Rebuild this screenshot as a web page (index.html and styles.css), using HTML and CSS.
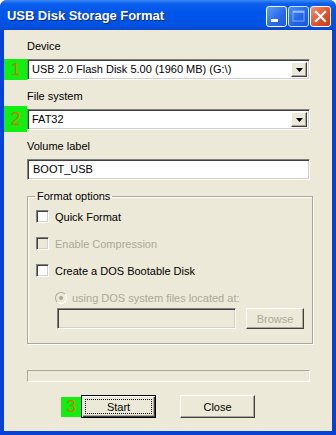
FILE: index.html
```html
<!DOCTYPE html>
<html>
<head>
<meta charset="utf-8">
<link rel="stylesheet" href="styles.css">
</head>
<body>
<div class="window">
  <div class="titlebar">
    <span class="title">USB Disk Storage Format</span>
    <div class="tbtns">
      <span class="tbtn min"><svg width="21" height="21" viewBox="0 0 21 21"><rect x="5" y="13" width="7" height="3" fill="#fff"/></svg></span>
      <span class="tbtn max"><svg width="21" height="21" viewBox="0 0 21 21"><rect x="5" y="5" width="11" height="10" fill="none" stroke="#fff" stroke-width="1" opacity="0.55"/><rect x="5" y="5" width="11" height="2" fill="#fff" opacity="0.55"/></svg></span>
      <span class="tbtn close"><svg width="21" height="21" viewBox="0 0 21 21"><path d="M6 6 L15 15 M15 6 L6 15" stroke="#fff" stroke-width="2.2" stroke-linecap="square"/></svg></span>
    </div>
  </div>
  <div class="body">
    <div class="label">Device</div>
    <div class="row">
      <span class="step s1">1</span>
      <div class="combo">
        <span class="ctext">USB 2.0 Flash Disk 5.00 (1960 MB) (G:\)</span>
        <span class="drop"><svg width="7" height="4" viewBox="0 0 7 4"><path d="M0 0 H7 L3.5 4 Z" fill="#000"/></svg></span>
      </div>
    </div>
    <div class="label">File system</div>
    <div class="row">
      <span class="step s2">2</span>
      <div class="combo">
        <span class="ctext">FAT32</span>
        <span class="drop"><svg width="7" height="4" viewBox="0 0 7 4"><path d="M0 0 H7 L3.5 4 Z" fill="#000"/></svg></span>
      </div>
    </div>
    <div class="label">Volume label</div>
    <div class="textbox">BOOT_USB</div>
    <fieldset class="group">
      <legend>Format options</legend>
      <div class="check"><span class="cb"></span><span>Quick Format</span></div>
      <div class="check disabled"><span class="cb"></span><span>Enable Compression</span></div>
      <div class="check"><span class="cb"></span><span>Create a DOS Bootable Disk</span></div>
      <div class="radio disabled"><span class="rb"><span class="dot"></span></span><span>using DOS system files located at:</span></div>
      <div class="pathrow">
        <div class="pathbox"></div>
        <div class="btn browse">Browse</div>
      </div>
    </fieldset>
    <div class="progress"></div>
    <div class="buttons">
      <span class="step s3">3</span>
      <div class="btn def"><span class="focus">Start</span></div>
      <div class="btn close-btn">Close</div>
    </div>
  </div>
</div>
</body>
</html>
```
FILE: styles.css
```css
html, body { margin: 0; padding: 0; }
body {
  width: 336px; height: 435px; overflow: hidden;
  font-family: "Liberation Sans", Arial, sans-serif;
  font-size: 11px; color: #000;
}
.window {
  width: 336px; height: 435px; box-sizing: border-box;
  background: #0841d8;
  display: flex; flex-direction: column;
  border-radius: 7px 7px 0 0;
  overflow: hidden;
}
.titlebar {
  height: 30px; flex: none;
  background: linear-gradient(to bottom, #3c8af5 0%, #0a5fee 12%, #0055ea 45%, #0052e2 85%, #0a48d0 100%);
  display: flex; align-items: center; justify-content: space-between;
  padding: 0 5px 0 7px;
}
.title {
  color: #fff; font-family: "Liberation Sans", sans-serif; font-weight: bold; font-size: 13px;
  text-shadow: 1px 1px 0 #0a2a80; letter-spacing: -0.05px;
}
.tbtns { display: flex; gap: 1px; margin-top: 2px; }
.tbtn {
  width: 21px; height: 21px; box-sizing: border-box;
  border: 1px solid #fff; border-radius: 3px;
  display: flex; overflow: hidden;
}
.tbtn svg { margin: -1px; }
.min { background: linear-gradient(135deg, #5a9cff, #2a68e8 60%, #2059d8); }
.max { background: linear-gradient(135deg, #5a9cff, #2a68e8 60%, #2059d8); opacity: 0.8; }
.close { background: linear-gradient(135deg, #f0907a, #e0532f 55%, #c83a18); }
.body {
  flex: 1; margin: 0 4px 4px 4px;
  background: #ece9d8;
  padding: 10px 22px 0 23px;
  display: flex; flex-direction: column;
}
.label { height: 13px; line-height: 13px; margin-bottom: 6px; }
.row { position: relative; height: 21px; margin-bottom: 10px; }
.step {
  position: absolute; left: -23px; top: 0; width: 23px; height: 21px;
  background: #12ee12; color: #c87800; font-size: 17px; line-height: 21px; text-align: center;
}
.s2 { top: -3px; height: 26px; line-height: 26px; font-size: 18px; }
.combo {
  height: 21px; box-sizing: border-box; background: #fff;
  border-top: 1px solid #808080; border-left: 1px solid #808080;
  border-right: 1px solid #fff; border-bottom: 1px solid #fff;
  box-shadow: inset 1px 1px 0 #404040, inset -1px -1px 0 #d4d0c8;
  display: flex; align-items: center; justify-content: space-between;
  padding: 0 2px 0 4px;
}
.ctext { line-height: 13px; }
.drop {
  width: 16px; height: 15px; box-sizing: border-box; background: #ece9d8;
  border-top: 1px solid #fff; border-left: 1px solid #fff;
  border-right: 1px solid #404040; border-bottom: 1px solid #404040;
  box-shadow: inset -1px -1px 0 #aca899;
  display: flex; align-items: center; justify-content: center;
}
.textbox {
  height: 21px; box-sizing: border-box; background: #fff;
  border-top: 1px solid #808080; border-left: 1px solid #808080;
  border-right: 1px solid #fff; border-bottom: 1px solid #fff;
  box-shadow: inset 1px 1px 0 #404040, inset -1px -1px 0 #d4d0c8;
  padding: 3px 5px; line-height: 13px;
}
.group {
  margin: 10px 0 0 0; padding: 7px 8px 9px 8px;
  border: 1px solid #aca899; box-shadow: inset 1px 1px 0 #fff, 1px 1px 0 #fff;
  height: 154px; box-sizing: border-box;
  display: flex; flex-direction: column;
}
.group legend { padding: 0 2px; margin-left: -1px; line-height: 13px; }
.check, .radio { display: flex; align-items: center; height: 13px; margin-bottom: 14px; }
.check .cb {
  width: 13px; height: 13px; box-sizing: border-box; background: #fff;
  border-top: 1px solid #808080; border-left: 1px solid #808080;
  border-right: 1px solid #fff; border-bottom: 1px solid #fff;
  box-shadow: inset 1px 1px 0 #404040, inset -1px -1px 0 #d4d0c8;
  margin-right: 6px;
}
.disabled { color: #aca899; }
.check.disabled .cb { background: #ece9d8; }
.radio { margin-left: 19px; margin-bottom: 4px; }
.rb {
  width: 12px; height: 12px; border-radius: 50%; box-sizing: border-box;
  border: 1px solid #aca899; border-right-color: #fff; border-bottom-color: #fff;
  background: #ece9d8; margin-right: 5px; display: flex; align-items: center; justify-content: center;
}
.rb .dot { width: 4px; height: 4px; border-radius: 50%; background: #aca899; }
.pathrow { display: flex; margin-left: 21px; gap: 10px; }
.pathbox {
  width: 179px; height: 21px; box-sizing: border-box; background: #ece9d8;
  border-top: 1px solid #808080; border-left: 1px solid #808080;
  border-right: 1px solid #fff; border-bottom: 1px solid #fff;
  box-shadow: inset 1px 1px 0 #404040, inset -1px -1px 0 #d4d0c8;
}
.btn {
  height: 21px; box-sizing: border-box; background: #ece9d8;
  border-top: 1px solid #fff; border-left: 1px solid #fff;
  border-right: 1px solid #404040; border-bottom: 1px solid #404040;
  box-shadow: inset -1px -1px 0 #aca899;
  display: flex; align-items: center; justify-content: center;
}
.browse { width: 58px; color: #aca899; }
.progress {
  margin-top: 26px; height: 12px; box-sizing: border-box;
  border-top: 1px solid #aca899; border-left: 1px solid #aca899;
  border-right: 1px solid #fff; border-bottom: 1px solid #fff;
}
.buttons { display: flex; margin-top: 13px; margin-left: 34px; align-items: center; position: relative; }
.buttons .step { position: static; width: 20px; height: 20px; line-height: 20px; font-size: 17px; }
.buttons .btn { width: 75px; height: 23px; }
.btn.def { border: 1px solid #000; box-shadow: inset 1px 1px 0 #fff, inset -1px -1px 0 #404040, inset -2px -2px 0 #aca899; padding: 3px; }
.btn.def .focus { flex: 1; align-self: stretch; border: 1px dotted #000; display: flex; align-items: center; justify-content: center; }
.close-btn { margin-left: 24px; }
```
